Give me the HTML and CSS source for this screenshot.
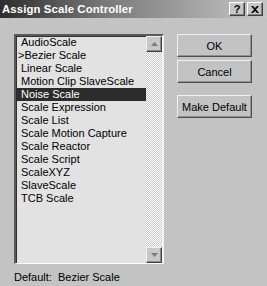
FILE: index.html
```html
<!DOCTYPE html>
<html>
<head>
<meta charset="utf-8">
<link rel="stylesheet" href="styles.css">
</head>
<body>
<div class="dialog">
  <div class="titlebar">
    <span class="title">Assign Scale Controller</span>
    <div class="tbtns">
      <span class="tbtn q">?</span>
      <span class="tbtn x">
        <svg width="8" height="7" viewBox="0 0 8 7"><path d="M0 0h2l2 2 2-2h2L5 3.5 8 7H6L4 5 2 7H0l3-3.5z" fill="#000"/></svg>
      </span>
    </div>
  </div>
  <div class="content">
    <div class="left">
      <div class="listbox">
        <ul class="items">
          <li>AudioScale</li>
          <li class="cur">&gt;Bezier Scale</li>
          <li>Linear Scale</li>
          <li>Motion Clip SlaveScale</li>
          <li class="sel">Noise Scale</li>
          <li>Scale Expression</li>
          <li>Scale List</li>
          <li>Scale Motion Capture</li>
          <li>Scale Reactor</li>
          <li>Scale Script</li>
          <li>ScaleXYZ</li>
          <li>SlaveScale</li>
          <li>TCB Scale</li>
        </ul>
        <div class="scrollbar">
          <div class="sbtn"><svg width="7" height="4" viewBox="0 0 7 4"><path d="M3.5 0L7 4H0z" fill="#7a7a7a"/></svg></div>
          <div class="track"></div>
          <div class="sbtn"><svg width="7" height="4" viewBox="0 0 7 4"><path d="M0 0h7L3.5 4z" fill="#7a7a7a"/></svg></div>
        </div>
      </div>
      <div class="default">Default:&nbsp; Bezier Scale</div>
    </div>
    <div class="buttons">
      <button class="btn">OK</button>
      <button class="btn">Cancel</button>
      <button class="btn gap">Make Default</button>
    </div>
  </div>
</div>
</body>
</html>
```

FILE: styles.css
```css
html, body {
  margin: 0;
  padding: 0;
  background: #c3c3c3;
}
.dialog {
  width: 267px;
  height: 286px;
  display: flex;
  flex-direction: column;
  font-family: "Liberation Sans", Arial, sans-serif;
  font-size: 11px;
  color: #000;
}
.titlebar {
  height: 18px;
  background: linear-gradient(to right, #2e2e2e 0%, #7a7a7a 40%, #c6c6c6 100%);
  display: flex;
  align-items: center;
  justify-content: space-between;
  padding: 0 4px 0 2px;
}
.title {
  color: #fff;
  font-weight: bold;
  font-size: 11.4px;
  letter-spacing: 0.1px;
}
.tbtns {
  display: flex;
  gap: 2px;
}
.tbtn {
  width: 14px;
  height: 12px;
  background: #c6c6c6;
  border: 1px solid;
  border-color: #fff #404040 #404040 #fff;
  box-shadow: inset -1px -1px 0 #808080;
  display: flex;
  align-items: center;
  justify-content: center;
  font-weight: bold;
  font-size: 11px;
  line-height: 12px;
}
.content {
  display: flex;
  gap: 13px;
  padding: 16px 0 0 14px;
}
.left {
  display: flex;
  flex-direction: column;
}
.listbox {
  width: 146px;
  height: 227px;
  display: flex;
  border-style: solid;
  border-width: 2px 2px 1px 2px;
  border-color: #5a5a5a #f4f4f4 #fff #5a5a5a;
  box-shadow: inset 1px 1px 0 #303030;
  background: #e2e2e2;
}
.items {
  list-style: none;
  margin: 0;
  padding: 0;
  flex: 1;
}
.items li {
  height: 13px;
  line-height: 13px;
  padding-left: 5px;
  white-space: nowrap;
}
.items li.cur {
  padding-left: 2px;
}
.items li.sel {
  background: #2c2c2c;
  color: #fff;
}
.scrollbar {
  width: 16px;
  display: flex;
  flex-direction: column;
}
.sbtn {
  width: 14px;
  height: 14px;
  background: #c8c8c8;
  border: 1px solid;
  border-color: #f0f0f0 #404040 #404040 #f0f0f0;
  box-shadow: inset -1px -1px 0 #8a8a8a;
  display: flex;
  align-items: center;
  justify-content: center;
}
.track {
  flex: 1;
  background-color: #fff;
  background-image: repeating-conic-gradient(#c8c8c8 0 25%, #fff 0 50%);
  background-size: 2px 2px;
}
.default {
  margin-top: 7px;
  line-height: 13px;
}
.buttons {
  display: flex;
  flex-direction: column;
  gap: 3px;
}
.btn {
  width: 75px;
  height: 23px;
  padding: 0;
  margin: 0;
  font-family: "Liberation Sans", Arial, sans-serif;
  font-size: 11px;
  color: #000;
  background: #c3c3c3;
  border: 1px solid;
  border-color: #f0f0f0 #505050 #505050 #f0f0f0;
  box-shadow: inset -1px -1px 0 #909090;
}
.btn.gap {
  margin-top: 9px;
}
```
